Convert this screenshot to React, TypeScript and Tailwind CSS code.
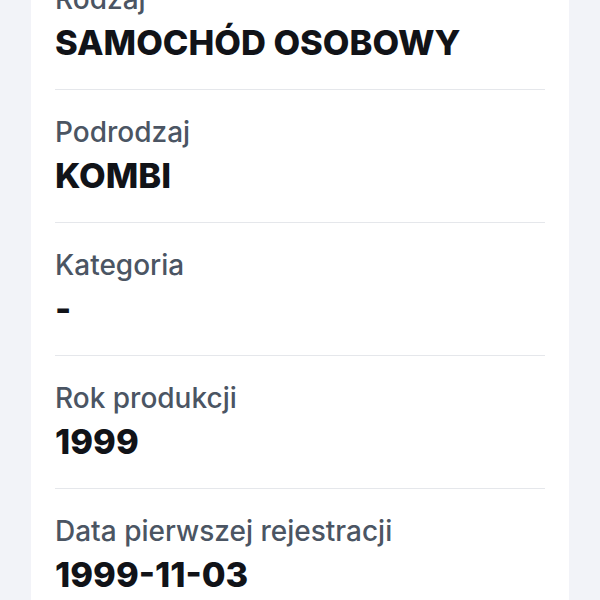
const rows = [
    { label: 'Rodzaj', value: 'SAMOCHÓD OSOBOWY' },
    { label: 'Podrodzaj', value: 'KOMBI' },
    { label: 'Kategoria', value: '-' },
    { label: 'Rok produkcji', value: '1999' },
    { label: 'Data pierwszej rejestracji', value: '1999-11-03' },
    { label: 'Numer VIN', value: '-' },
]

export default function App() {
    return (
        <div
            className="h-[600px] w-[600px] overflow-hidden bg-[#f2f3f8]"
            style={{ fontFamily: 'Inter, "Noto Sans", sans-serif' }}
        >
            <div className="mx-[31px] -mt-[43px] rounded-2xl bg-white px-6">
                {rows.map((row, i) => (
                    <div
                        key={row.label}
                        className={`pt-[23.5px] pb-[26.5px] ${i > 0 ? 'border-t border-[#e5e7eb]' : ''}`}
                    >
                        <div className="text-[28px] font-medium leading-[36px] text-[#4b5563]">{row.label}</div>
                        <div className="mt-[6px] text-[34.5px] font-extrabold leading-[40px] text-[#111318]">
                            {row.value}
                        </div>
                    </div>
                ))}
            </div>
        </div>
    )
}
